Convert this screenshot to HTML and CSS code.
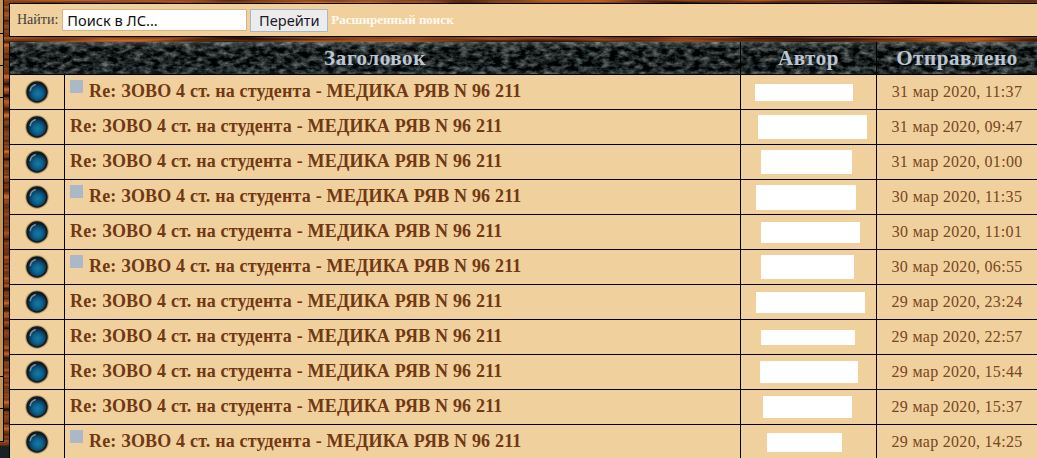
FILE: index.html
```html
<!DOCTYPE html>
<html lang="ru">
<head>
<meta charset="utf-8">
<title>Личные сообщения</title>
<link rel="stylesheet" href="styles.css">
</head>
<body>
<svg class="defs" width="0" height="0" aria-hidden="true">
  <defs>
    <radialGradient id="orbFill" cx="54%" cy="58%" r="54%">
      <stop offset="0" stop-color="#127ba6"/>
      <stop offset=".45" stop-color="#0c648f"/>
      <stop offset=".75" stop-color="#0a4568"/>
      <stop offset="1" stop-color="#0a2233"/>
    </radialGradient>
    <symbol id="orb" viewBox="0 0 24 24">
      <circle cx="12" cy="12" r="11.8" fill="#a58f62" opacity=".8"/>
      <circle cx="12" cy="12" r="10.7" fill="#14181a"/>
      <circle cx="12" cy="12.2" r="9" fill="url(#orbFill)"/>
      <path d="M5.2 10.6C5.8 7.6 7.6 5.6 10.2 4.8" fill="none" stroke="#9fb4bf" stroke-width="1.5" stroke-linecap="round" opacity=".75"/>
    </symbol>
  </defs>
</svg>
<div class="page">
  <aside class="side">
    <div class="side-cells">
      <div class="side-cell c1"></div>
      <div class="side-cell c2"></div>
      <div class="side-cell c2"></div>
      <div class="side-cell c3"></div>
      <div class="side-cell c2"></div>
      <div class="side-cell c2"></div>
    </div>
    <div class="side-stone"></div>
  </aside>
  <main class="panel">
    <form class="search">
      <label class="search-label" for="q">Найти:</label>
      <input class="search-input" id="q" type="text" value="Поиск в ЛС...">
      <button class="search-btn" type="button">Перейти</button>
      <a class="search-link" href="#">Расширенный поиск</a>
    </form>
    <div class="table">
      <div class="head">
        <div class="hcell">Заголовок</div>
        <div class="hcell">Автор</div>
        <div class="hcell">Отправлено</div>
      </div>
      <div class="row">
        <div class="cell icon"><svg class="orb"><use href="#orb"/></svg></div>
        <div class="cell subject"><span class="mark"></span><a href="#">Re: ЗОВО 4 ст. на студента - МЕДИКА РЯВ N 96 211</a></div>
        <div class="cell author"><span class="mask" style="width:98px;height:17px;margin-left:14px"></span></div>
        <div class="cell date">31 мар 2020, 11:37</div>
      </div>
      <div class="row">
        <div class="cell icon"><svg class="orb"><use href="#orb"/></svg></div>
        <div class="cell subject"><a href="#">Re: ЗОВО 4 ст. на студента - МЕДИКА РЯВ N 96 211</a></div>
        <div class="cell author"><span class="mask" style="width:109px;height:24px;margin-left:17px"></span></div>
        <div class="cell date">31 мар 2020, 09:47</div>
      </div>
      <div class="row">
        <div class="cell icon"><svg class="orb"><use href="#orb"/></svg></div>
        <div class="cell subject"><a href="#">Re: ЗОВО 4 ст. на студента - МЕДИКА РЯВ N 96 211</a></div>
        <div class="cell author"><span class="mask" style="width:91px;height:24px;margin-left:20px"></span></div>
        <div class="cell date">31 мар 2020, 01:00</div>
      </div>
      <div class="row">
        <div class="cell icon"><svg class="orb"><use href="#orb"/></svg></div>
        <div class="cell subject"><span class="mark"></span><a href="#">Re: ЗОВО 4 ст. на студента - МЕДИКА РЯВ N 96 211</a></div>
        <div class="cell author"><span class="mask" style="width:100px;height:25px;margin-left:15px"></span></div>
        <div class="cell date">30 мар 2020, 11:35</div>
      </div>
      <div class="row">
        <div class="cell icon"><svg class="orb"><use href="#orb"/></svg></div>
        <div class="cell subject"><a href="#">Re: ЗОВО 4 ст. на студента - МЕДИКА РЯВ N 96 211</a></div>
        <div class="cell author"><span class="mask" style="width:99px;height:21px;margin-left:20px"></span></div>
        <div class="cell date">30 мар 2020, 11:01</div>
      </div>
      <div class="row">
        <div class="cell icon"><svg class="orb"><use href="#orb"/></svg></div>
        <div class="cell subject"><span class="mark"></span><a href="#">Re: ЗОВО 4 ст. на студента - МЕДИКА РЯВ N 96 211</a></div>
        <div class="cell author"><span class="mask" style="width:93px;height:24px;margin-left:20px"></span></div>
        <div class="cell date">30 мар 2020, 06:55</div>
      </div>
      <div class="row">
        <div class="cell icon"><svg class="orb"><use href="#orb"/></svg></div>
        <div class="cell subject"><a href="#">Re: ЗОВО 4 ст. на студента - МЕДИКА РЯВ N 96 211</a></div>
        <div class="cell author"><span class="mask" style="width:109px;height:21px;margin-left:15px"></span></div>
        <div class="cell date">29 мар 2020, 23:24</div>
      </div>
      <div class="row">
        <div class="cell icon"><svg class="orb"><use href="#orb"/></svg></div>
        <div class="cell subject"><a href="#">Re: ЗОВО 4 ст. на студента - МЕДИКА РЯВ N 96 211</a></div>
        <div class="cell author"><span class="mask" style="width:94px;height:15px;margin-left:20px"></span></div>
        <div class="cell date">29 мар 2020, 22:57</div>
      </div>
      <div class="row">
        <div class="cell icon"><svg class="orb"><use href="#orb"/></svg></div>
        <div class="cell subject"><a href="#">Re: ЗОВО 4 ст. на студента - МЕДИКА РЯВ N 96 211</a></div>
        <div class="cell author"><span class="mask" style="width:98px;height:22px;margin-left:19px"></span></div>
        <div class="cell date">29 мар 2020, 15:44</div>
      </div>
      <div class="row">
        <div class="cell icon"><svg class="orb"><use href="#orb"/></svg></div>
        <div class="cell subject"><a href="#">Re: ЗОВО 4 ст. на студента - МЕДИКА РЯВ N 96 211</a></div>
        <div class="cell author"><span class="mask" style="width:89px;height:22px;margin-left:22px"></span></div>
        <div class="cell date">29 мар 2020, 15:37</div>
      </div>
      <div class="row">
        <div class="cell icon"><svg class="orb"><use href="#orb"/></svg></div>
        <div class="cell subject"><span class="mark"></span><a href="#">Re: ЗОВО 4 ст. на студента - МЕДИКА РЯВ N 96 211</a></div>
        <div class="cell author"><span class="mask" style="width:75px;height:19px;margin-left:26px"></span></div>
        <div class="cell date">29 мар 2020, 14:25</div>
      </div>
    </div>
  </main>
</div>
</body>
</html>
```
FILE: styles.css
```css
* { box-sizing: border-box; }
html, body { margin: 0; height: 458px; overflow: hidden; }
body {
  font-family: "Liberation Serif", serif;
  background-color: #7a3b13;
  background-image: url("data:image/svg+xml,%3Csvg xmlns='http://www.w3.org/2000/svg' width='1037' height='458'%3E%3Cfilter id='w' x='0' y='0' width='100%25' height='100%25' color-interpolation-filters='sRGB'%3E%3CfeTurbulence type='fractalNoise' baseFrequency='.006 .16' numOctaves='3' seed='7'/%3E%3CfeColorMatrix values='1.3 0 0 0 -.16 .7 0 0 0 -.11 .25 0 0 0 -.04 0 0 0 0 1'/%3E%3C/filter%3E%3Crect width='1037' height='458' filter='url(%23w)'/%3E%3C/svg%3E");
}
.defs { position: absolute; }
.page { display: flex; height: 458px; }

.side { width: 9px; flex: none; display: flex; flex-direction: column; }
.side-cells { flex: none; width: 4px; background: #c79758; border-right: 1px solid #000; border-bottom: 1px solid #000; }
.side-cell { border-bottom: 1px solid #000; }
.side-cell:last-child { border-bottom: 0; }
.c1 { height: 34px; }
.c2 { height: 32px; }
.c3 { height: 279px; }
.side-stone {
  flex: none;
  width: 9px;
  height: 12px;
  margin-top: 4px;
  background-color: #1a2122;
}

.panel { flex: 1; min-width: 0; display: flex; flex-direction: column; padding-top: 3px; }

.search {
  flex: none;
  height: 34px;
  display: flex;
  align-items: center;
  padding: 0 0 0 7px;
  background: #f0d09c;
  border: 1px solid #000;
  border-right: 0;
}
.search-label { font-size: 14px; color: #3f3f3f; margin-right: 4px; }
.search-input {
  width: 185px;
  height: 22px;
  padding: 0 4px;
  border: 1px solid #d4b684;
  border-radius: 0;
  background: #fff;
  color: #111;
  font: 14.6px "Noto Sans", sans-serif;
}
.search-btn {
  width: 78px;
  height: 23px;
  margin-left: 3px;
  padding: 0;
  border: 1px solid #a9b8c9;
  border-radius: 0;
  background: #ececec;
  color: #1a1a2a;
  font: 14.6px "Noto Sans", sans-serif;
}
.search-link { margin-left: 3px; font-size: 13px; font-weight: 700; color: #fffaf0; text-decoration: none; }

.table { flex: none; margin-top: 5px; border-left: 1px solid #000; }

.head {
  display: grid;
  grid-template-columns: 731px 136px 1fr;
  height: 33px;
  border-bottom: 1px solid #000;
  background-color: #161d1e;
  background-image: url("data:image/svg+xml,%3Csvg xmlns='http://www.w3.org/2000/svg' width='1037' height='33'%3E%3ClinearGradient id='g' x1='0' y1='0' x2='0' y2='1'%3E%3Cstop offset='0' stop-color='%23fff' stop-opacity='.22'/%3E%3Cstop offset='.2' stop-color='%23fff' stop-opacity='0'/%3E%3Cstop offset='.8' stop-color='%23fff' stop-opacity='0'/%3E%3Cstop offset='1' stop-color='%23fff' stop-opacity='.1'/%3E%3C/linearGradient%3E%3Cfilter id='s' x='0' y='0' width='100%25' height='100%25' color-interpolation-filters='sRGB'%3E%3CfeTurbulence type='fractalNoise' baseFrequency='.12 .2' numOctaves='4' seed='11'/%3E%3CfeColorMatrix values='.8 0 0 0 -.29 .8 0 0 0 -.26 .8 0 0 0 -.26 0 0 0 0 1'/%3E%3C/filter%3E%3Crect width='1037' height='33' filter='url(%23s)'/%3E%3Crect width='1037' height='33' fill='url(%23g)'/%3E%3C/svg%3E");
}
.hcell {
  display: flex;
  align-items: center;
  justify-content: center;
  border-right: 1px solid #000;
  color: #bcc6d2;
  font-size: 21px;
  font-weight: 700;
  letter-spacing: .6px;
}
.hcell:last-child { border-right: 0; }

.row {
  display: grid;
  grid-template-columns: 55px 676px 136px 1fr;
  height: 35px;
  border-bottom: 1px solid #000;
  background: #f0d09c;
}
.cell { display: flex; align-items: center; border-right: 1px solid #000; min-width: 0; }
.cell:last-child { border-right: 0; }
.icon { justify-content: center; }
.orb { width: 24px; height: 24px; display: block; }
.subject { padding: 0 0 2px 5px; }
.subject a { color: #703814; font-size: 18px; font-weight: 700; letter-spacing: .18px; text-decoration: none; white-space: nowrap; }
.mark { width: 13px; height: 13px; margin: -9px 6px 0 0; flex: none; background: #aab8c8; }
.mask { display: block; background: #fff; flex: none; }
.date { justify-content: center; color: #774623; font-size: 16px; letter-spacing: .3px; }
```
